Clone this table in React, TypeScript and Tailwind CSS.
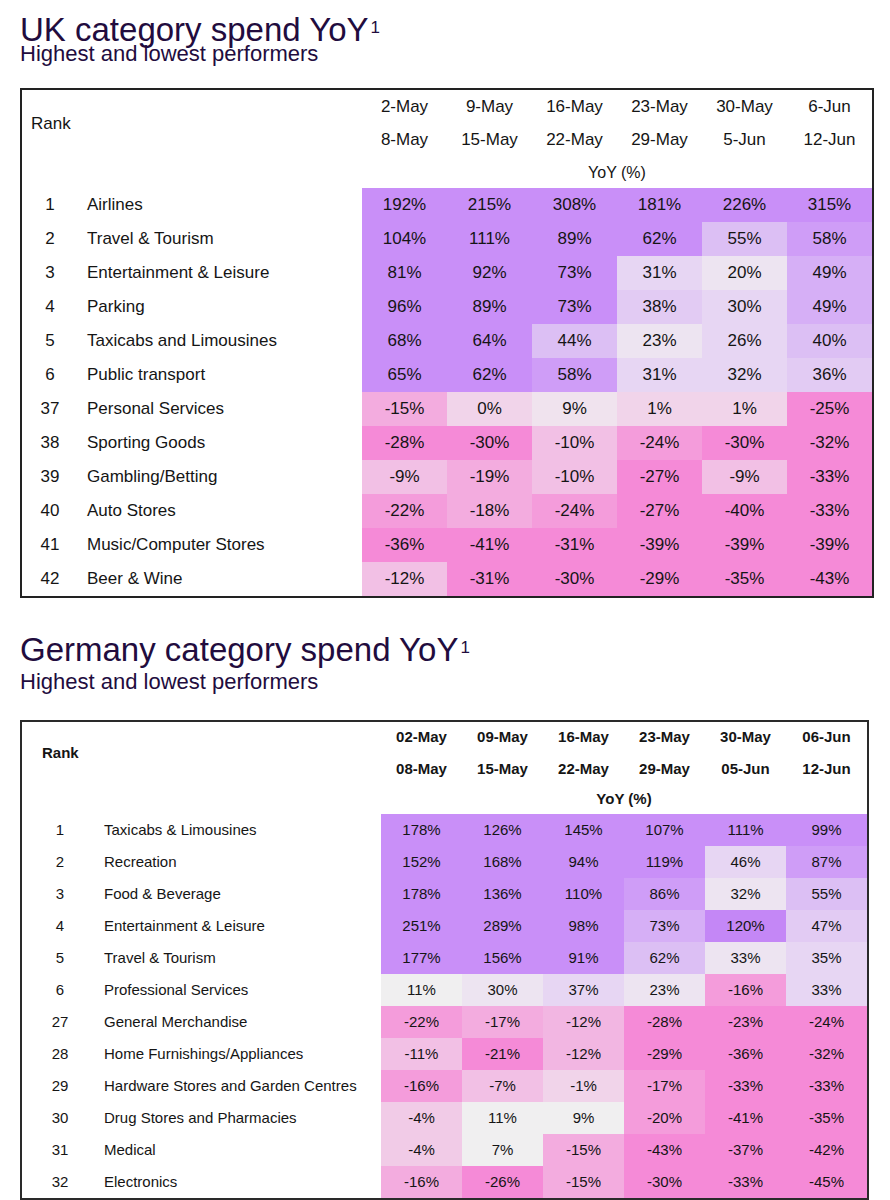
import React from 'react'

const bg: Record<string, string> = {
  P6: 'bg-[#c487f6]',
  P5: 'bg-[#c98ff8]',
  P4: 'bg-[#cf9df7]',
  P3: 'bg-[#d6aff6]',
  P2: 'bg-[#dcbff4]',
  P1b: 'bg-[#e2cbf3]',
  P1: 'bg-[#e7d6f3]',
  P0: 'bg-[#ede4f1]',
  N: 'bg-[#f0eff0]',
  K0: 'bg-[#f0e3ee]',
  K1: 'bg-[#f1d4ea]',
  K1b: 'bg-[#f1cbe7]',
  K2: 'bg-[#f2c0e5]',
  K2b: 'bg-[#f2b6e2]',
  K3: 'bg-[#f3acdf]',
  K4: 'bg-[#f49cdb]',
  K5: 'bg-[#f58ad7]',
}

type Row = { rank: string; name: string; vals: string[]; c: string[] }

const ukDates = [
  ['2-May', '8-May'],
  ['9-May', '15-May'],
  ['16-May', '22-May'],
  ['23-May', '29-May'],
  ['30-May', '5-Jun'],
  ['6-Jun', '12-Jun'],
]

const ukRows: Row[] = [
  { rank: '1', name: 'Airlines', vals: ['192%', '215%', '308%', '181%', '226%', '315%'], c: ['P5', 'P5', 'P5', 'P5', 'P5', 'P5'] },
  { rank: '2', name: 'Travel & Tourism', vals: ['104%', '111%', '89%', '62%', '55%', '58%'], c: ['P5', 'P5', 'P5', 'P5', 'P2', 'P4'] },
  { rank: '3', name: 'Entertainment & Leisure', vals: ['81%', '92%', '73%', '31%', '20%', '49%'], c: ['P5', 'P5', 'P5', 'P1', 'P0', 'P3'] },
  { rank: '4', name: 'Parking', vals: ['96%', '89%', '73%', '38%', '30%', '49%'], c: ['P5', 'P5', 'P5', 'P1b', 'P1', 'P3'] },
  { rank: '5', name: 'Taxicabs and Limousines', vals: ['68%', '64%', '44%', '23%', '26%', '40%'], c: ['P5', 'P5', 'P2', 'P0', 'P1', 'P2'] },
  { rank: '6', name: 'Public transport', vals: ['65%', '62%', '58%', '31%', '32%', '36%'], c: ['P5', 'P5', 'P4', 'P1', 'P1', 'P1b'] },
  { rank: '37', name: 'Personal Services', vals: ['-15%', '0%', '9%', '1%', '1%', '-25%'], c: ['K3', 'K1', 'K0', 'K1', 'K1', 'K5'] },
  { rank: '38', name: 'Sporting Goods', vals: ['-28%', '-30%', '-10%', '-24%', '-30%', '-32%'], c: ['K5', 'K5', 'K2', 'K4', 'K5', 'K5'] },
  { rank: '39', name: 'Gambling/Betting', vals: ['-9%', '-19%', '-10%', '-27%', '-9%', '-33%'], c: ['K2', 'K3', 'K2', 'K5', 'K2', 'K5'] },
  { rank: '40', name: 'Auto Stores', vals: ['-22%', '-18%', '-24%', '-27%', '-40%', '-33%'], c: ['K4', 'K3', 'K4', 'K5', 'K5', 'K5'] },
  { rank: '41', name: 'Music/Computer Stores', vals: ['-36%', '-41%', '-31%', '-39%', '-39%', '-39%'], c: ['K5', 'K5', 'K5', 'K5', 'K5', 'K5'] },
  { rank: '42', name: 'Beer & Wine', vals: ['-12%', '-31%', '-30%', '-29%', '-35%', '-43%'], c: ['K2', 'K5', 'K5', 'K5', 'K5', 'K5'] },
]

const deDates = [
  ['02-May', '08-May'],
  ['09-May', '15-May'],
  ['16-May', '22-May'],
  ['23-May', '29-May'],
  ['30-May', '05-Jun'],
  ['06-Jun', '12-Jun'],
]

const deRows: Row[] = [
  { rank: '1', name: 'Taxicabs & Limousines', vals: ['178%', '126%', '145%', '107%', '111%', '99%'], c: ['P5', 'P5', 'P5', 'P5', 'P5', 'P5'] },
  { rank: '2', name: 'Recreation', vals: ['152%', '168%', '94%', '119%', '46%', '87%'], c: ['P5', 'P5', 'P5', 'P5', 'P1', 'P4'] },
  { rank: '3', name: 'Food & Beverage', vals: ['178%', '136%', '110%', '86%', '32%', '55%'], c: ['P5', 'P5', 'P5', 'P4', 'P0', 'P2'] },
  { rank: '4', name: 'Entertainment & Leisure', vals: ['251%', '289%', '98%', '73%', '120%', '47%'], c: ['P5', 'P5', 'P5', 'P3', 'P6', 'P1b'] },
  { rank: '5', name: 'Travel & Tourism', vals: ['177%', '156%', '91%', '62%', '33%', '35%'], c: ['P5', 'P5', 'P5', 'P2', 'P0', 'P1'] },
  { rank: '6', name: 'Professional Services', vals: ['11%', '30%', '37%', '23%', '-16%', '33%'], c: ['N', 'P0', 'P1', 'P0', 'K4', 'P1'] },
  { rank: '27', name: 'General Merchandise', vals: ['-22%', '-17%', '-12%', '-28%', '-23%', '-24%'], c: ['K4', 'K3', 'K2b', 'K5', 'K5', 'K5'] },
  { rank: '28', name: 'Home Furnishings/Appliances', vals: ['-11%', '-21%', '-12%', '-29%', '-36%', '-32%'], c: ['K2', 'K5', 'K2b', 'K5', 'K5', 'K5'] },
  { rank: '29', name: 'Hardware Stores and Garden Centres', vals: ['-16%', '-7%', '-1%', '-17%', '-33%', '-33%'], c: ['K4', 'K2', 'K1', 'K4', 'K5', 'K5'] },
  { rank: '30', name: 'Drug Stores and Pharmacies', vals: ['-4%', '11%', '9%', '-20%', '-41%', '-35%'], c: ['K1b', 'N', 'N', 'K4', 'K5', 'K5'] },
  { rank: '31', name: 'Medical', vals: ['-4%', '7%', '-15%', '-43%', '-37%', '-42%'], c: ['K1b', 'N', 'K3', 'K5', 'K5', 'K5'] },
  { rank: '32', name: 'Electronics', vals: ['-16%', '-26%', '-15%', '-30%', '-33%', '-45%'], c: ['K3', 'K5', 'K3', 'K5', 'K5', 'K5'] },
]

const Title = ({ text, className }: { text: string; className?: string }) => (
  <div className={className}>
    <h1 className="text-[33px] leading-[26px] text-[#220c3e]">
      {text}
      <span className="ml-[2px] text-[17px] leading-none align-[8px]">1</span>
    </h1>
  </div>
)

const App = () => {
  return (
    <div className="w-[890px] min-h-[1200px] bg-white px-[20px] font-['Liberation_Sans',Arial,sans-serif] text-[#151515]">
      {/* UK */}
      <Title text="UK category spend YoY" className="pt-[17px]" />
      <p className="mt-[1px] text-[22px] leading-[20px] text-[#220c3e]">Highest and lowest performers</p>

      <div className="mt-[24px] w-[854px] border-2 border-[#222]">
        <div className="grid grid-cols-[56px_284px_repeat(6,85px)] text-[17px]">
          <div className="col-span-2 row-span-2 flex items-center pl-[9px]">Rank</div>
          {ukDates.map((d) => (
            <div key={d[0]} className="h-[33px] flex items-center justify-center">{d[0]}</div>
          ))}
          {ukDates.map((d) => (
            <div key={d[1]} className="h-[34px] flex items-center justify-center">{d[1]}</div>
          ))}
          <div className="col-span-2 h-[31px]" />
          <div className="col-span-6 flex items-center justify-center text-[16px]">YoY (%)</div>
        </div>
        {ukRows.map((r) => (
          <div key={r.rank} className="grid grid-cols-[56px_284px_repeat(6,85px)] h-[34px] text-[17px]">
            <div className="flex items-center justify-center">{r.rank}</div>
            <div className="flex items-center pl-[9px]">{r.name}</div>
            {r.vals.map((v, i) => (
              <div key={i} className={`flex items-center justify-center ${bg[r.c[i]]}`}>{v}</div>
            ))}
          </div>
        ))}
      </div>

      {/* Germany */}
      <Title text="Germany category spend YoY" className="mt-[39px]" />
      <p className="mt-[9px] text-[22px] leading-[20px] text-[#220c3e]">Highest and lowest performers</p>

      <div className="mt-[28px] w-[849px] border-2 border-[#2a2a2a]">
        <div className="grid grid-cols-[76px_283px_repeat(6,81px)] text-[15px] font-bold">
          <div className="col-span-2 row-span-2 flex items-center pl-[20px]">Rank</div>
          {deDates.map((d) => (
            <div key={d[0]} className="h-[31px] flex items-center justify-center">{d[0]}</div>
          ))}
          {deDates.map((d) => (
            <div key={d[1]} className="h-[32px] flex items-center justify-center">{d[1]}</div>
          ))}
          <div className="col-span-2 h-[29px]" />
          <div className="col-span-6 flex items-center justify-center">YoY (%)</div>
        </div>
        {deRows.map((r) => (
          <div key={r.rank} className="grid grid-cols-[76px_283px_repeat(6,81px)] h-[32px] text-[15px]">
            <div className="flex items-center justify-center">{r.rank}</div>
            <div className="flex items-center pl-[6px]">{r.name}</div>
            {r.vals.map((v, i) => (
              <div key={i} className={`flex items-center justify-center ${bg[r.c[i]]}`}>{v}</div>
            ))}
          </div>
        ))}
      </div>
    </div>
  )
}

export default App
